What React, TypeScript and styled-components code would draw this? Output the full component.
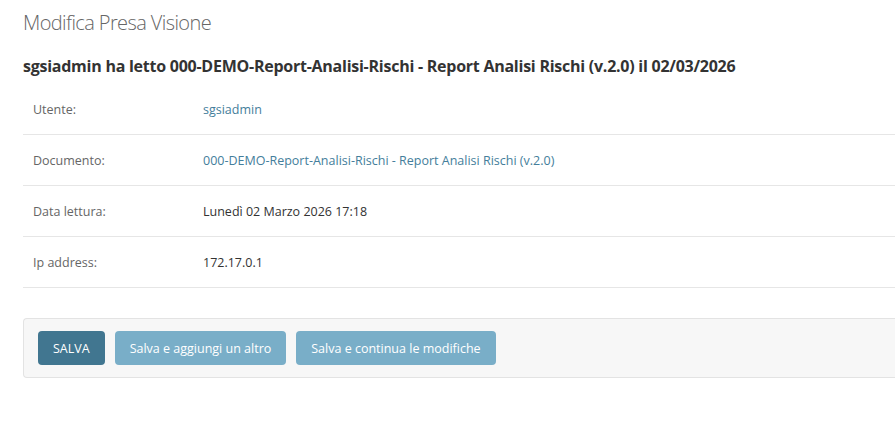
import styled, { createGlobalStyle } from "styled-components";

const GlobalStyle = createGlobalStyle`
  html, body {
    margin: 0;
    padding: 0;
    background: #fff;
    overflow: hidden;
  }
  body {
    font-family: "Open Sans", "Noto Sans", sans-serif;
    color: #333;
  }
`;

const rows = [
  { label: "Utente:", value: "sgsiadmin", link: true },
  {
    label: "Documento:",
    value: "000-DEMO-Report-Analisi-Rischi - Report Analisi Rischi (v.2.0)",
    link: true,
  },
  { label: "Data lettura:", value: "Lunedì 02 Marzo 2026 17:18", link: false },
  { label: "Ip address:", value: "172.17.0.1", link: false },
];

const App = () => {
  return (
    <Page>
      <GlobalStyle />
      <Title>Modifica Presa Visione</Title>
      <Heading>
        sgsiadmin ha letto 000-DEMO-Report-Analisi-Rischi - Report Analisi
        Rischi (v.2.0) il 02/03/2026
      </Heading>
      <Table>
        {rows.map((r) => (
          <Row key={r.label}>
            <Label>{r.label}</Label>
            <Value $link={r.link}>{r.value}</Value>
          </Row>
        ))}
      </Table>
      <SubmitRow>
        <Button $primary>SALVA</Button>
        <Button>Salva e aggiungi un altro</Button>
        <Button>Salva e continua le modifiche</Button>
      </SubmitRow>
    </Page>
  );
};

export default App;

// the page is cut at the right edge, so no right border or padding
const Page = styled.div`
  padding: 10px 0 0 23px;
`;

const Title = styled.h1`
  margin: 0;
  font-size: 20px;
  font-weight: 300;
  color: #666;
  line-height: 26px;
  letter-spacing: -0.6px;
`;

const Heading = styled.h2`
  margin: 19px 0 0;
  font-size: 16px;
  font-weight: 700;
  color: #333;
  line-height: 22px;
  letter-spacing: -0.25px;
  white-space: nowrap;
`;

const Table = styled.div`
  margin-top: 7px;
`;

const Row = styled.div`
  display: flex;
  align-items: center;
  height: 50px;
  padding-left: 10px;
  border-bottom: 1px solid #e6e6e6;
  font-size: 12.5px;
`;

const Label = styled.div`
  width: 170px;
  color: #666;
`;

const Value = styled.div<{ $link?: boolean }>`
  color: ${(p) => (p.$link ? "#447e9b" : "#333")};
`;

const SubmitRow = styled.div`
  margin-top: 30px;
  display: flex;
  gap: 10px;
  align-items: center;
  height: 58px;
  padding-left: 14px;
  background: #f7f7f7;
  border: 1px solid #e3e3e3;
  border-right: none;
  border-radius: 4px 0 0 4px;
`;

const Button = styled.button<{ $primary?: boolean }>`
  height: 34px;
  padding: 0 15px;
  border: none;
  border-radius: 4px;
  background: ${(p) => (p.$primary ? "#417690" : "#79aec8")};
  color: #fff;
  font-family: "Open Sans", "Noto Sans", sans-serif;
  font-size: 12.5px;
  cursor: pointer;
`;
